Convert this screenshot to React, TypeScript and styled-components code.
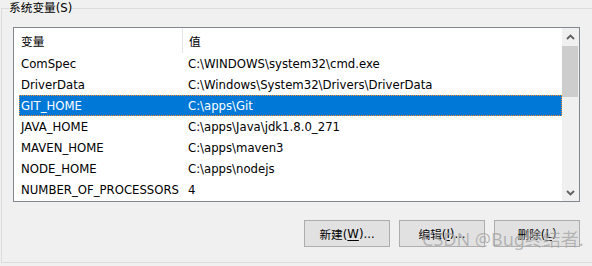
import React from "react";
import styled, { createGlobalStyle } from "styled-components";

const GlobalStyle = createGlobalStyle`
  html, body {
    margin: 0;
    padding: 0;
    background: #f0f0f0;
    overflow: hidden;
  }
  body {
    font-family: "DejaVu Sans", "Noto Sans CJK SC", sans-serif;
    font-size: 11.7px;
    color: #000;
  }
`;

const Page = styled.div`
  position: relative;
  width: 592px;
  height: 266px;
  overflow: hidden;
  background: #f0f0f0;
`;

const Group = styled.fieldset`
  box-sizing: border-box;
  margin: 0 0 0 1px;
  padding: 0 0 0 11px;
  width: 620px;
  height: 263px;
  border: 1px solid #dcdcdc;
  min-width: 0;
`;

const Legend = styled.legend`
  margin-left: -4px;
  padding: 0;
  line-height: 16px;
  color: #000;
`;

const ListBox = styled.div`
  box-sizing: border-box;
  margin-top: 11px;
  width: 567px;
  height: 175px;
  border: 1px solid #828790;
  background: #fff;
  display: flex;
`;

const ListMain = styled.div`
  flex: 1;
  display: flex;
  flex-direction: column;
  min-width: 0;
`;

const Header = styled.div`
  display: flex;
  height: 25px;
  align-items: stretch;
`;

const HeaderCell = styled.div<{ $w?: number }>`
  box-sizing: border-box;
  ${(p) => (p.$w ? `width: ${p.$w}px;` : "flex: 1;")}
  padding-left: ${(p) => (p.$w ? 7 : 6)}px;
  display: flex;
  align-items: center;
  border-right: ${(p) => (p.$w ? "1px solid #e5e5e5" : "none")};
`;

const Row = styled.div<{ $selected?: boolean }>`
  box-sizing: border-box;
  display: flex;
  align-items: center;
  height: 21px;
  margin-left: 5px;
  background: ${(p) => (p.$selected ? "#0078d7" : "transparent")};
  color: ${(p) => (p.$selected ? "#fff" : "#000")};
  border: 1px dotted ${(p) => (p.$selected ? "#ff8a28" : "transparent")};
  white-space: nowrap;
`;

const NameCell = styled.div`
  box-sizing: border-box;
  width: 162px;
  padding-left: 1px;
  overflow: hidden;
`;

const ValueCell = styled.div`
  flex: 1;
  padding-left: 6px;
  overflow: hidden;
`;

const ScrollBar = styled.div`
  width: 17px;
  display: flex;
  flex-direction: column;
  background: #f0f0f0;
`;

const ScrollButton = styled.div`
  height: 17px;
  display: flex;
  align-items: center;
  justify-content: center;
`;

const Track = styled.div`
  flex: 1;
  display: flex;
  flex-direction: column;
`;

const Thumb = styled.div`
  height: 51px;
  margin: 1px 1px 0 0;
  background: #cdcdcd;
`;

const Buttons = styled.div`
  display: flex;
  justify-content: flex-end;
  gap: 9px;
  width: 567px;
  margin-top: 18px;
`;

const Button = styled.div`
  box-sizing: border-box;
  width: 86px;
  height: 27px;
  border: 1px solid #adadad;
  background: #e1e1e1;
  display: flex;
  align-items: center;
  justify-content: center;
  u {
    text-decoration: underline;
    text-underline-offset: 2px;
  }
`;

const Plain = styled.span``;

const Watermark = styled.div`
  position: absolute;
  left: 422px;
  top: 228px;
  font-family: "Noto Sans", "Noto Sans CJK SC", sans-serif;
  font-size: 18px;
  line-height: 22px;
  color: rgba(115, 115, 115, 0.5);
  text-shadow: 0 0 1px rgba(255, 255, 255, 0.6);
  white-space: nowrap;
  pointer-events: none;
`;

const Chevron = ({ up }: { up?: boolean }) => (
  <svg width="9" height="6" viewBox="0 0 9 6">
    <path
      d={up ? "M1 5 L4.5 1.5 L8 5" : "M1 1 L4.5 4.5 L8 1"}
      fill="none"
      stroke="#606060"
      strokeWidth="1.8"
    />
  </svg>
);

const rows: [string, string][] = [
  ["ComSpec", "C:\\WINDOWS\\system32\\cmd.exe"],
  ["DriverData", "C:\\Windows\\System32\\Drivers\\DriverData"],
  ["GIT_HOME", "C:\\apps\\Git"],
  ["JAVA_HOME", "C:\\apps\\Java\\jdk1.8.0_271"],
  ["MAVEN_HOME", "C:\\apps\\maven3"],
  ["NODE_HOME", "C:\\apps\\nodejs"],
  ["NUMBER_OF_PROCESSORS", "4"],
];

export default function App() {
  return (
    <Page>
      <GlobalStyle />
      <Group>
        <Legend>
          系统变量(<Plain>S</Plain>)
        </Legend>
        <ListBox>
          <ListMain>
            <Header>
              <HeaderCell $w={169}>变量</HeaderCell>
              <HeaderCell>值</HeaderCell>
            </Header>
            {rows.map(([n, v]) => (
              <Row key={n} $selected={n === "GIT_HOME"}>
                <NameCell>{n}</NameCell>
                <ValueCell>{v}</ValueCell>
              </Row>
            ))}
          </ListMain>
          <ScrollBar>
            <ScrollButton>
              <Chevron up />
            </ScrollButton>
            <Track>
              <Thumb />
            </Track>
            <ScrollButton>
              <Chevron />
            </ScrollButton>
          </ScrollBar>
        </ListBox>
        <Buttons>
          <Button>
            新建(<u>W</u>)...
          </Button>
          <Button>
            编辑(<u>I</u>)...
          </Button>
          <Button>
            删除(<u>L</u>)
          </Button>
        </Buttons>
      </Group>
      <Watermark>CSDN @Bug终结者.</Watermark>
    </Page>
  );
}
